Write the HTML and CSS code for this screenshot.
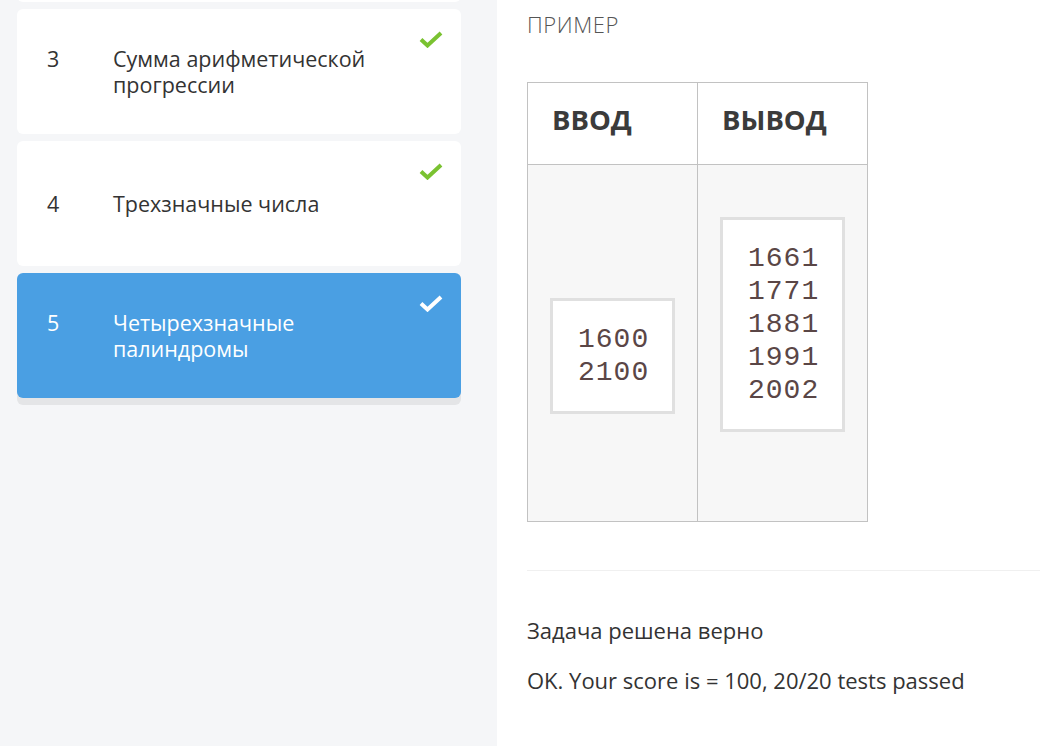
FILE: index.html
```html
<!DOCTYPE html>
<html lang="ru">
<head>
<meta charset="utf-8">
<link rel="stylesheet" href="styles.css">
</head>
<body>
<div class="page">
  <aside class="sidebar">
    <ul class="tasks">
      <li class="task task-hidden"></li>
      <li class="task">
        <div class="task-row"><span class="num">3</span><span class="title">Сумма арифметической прогрессии</span></div>
        <svg class="check" viewBox="0 0 24 17"><path d="M2 8.5l6.5 6L22 2" /></svg>
      </li>
      <li class="task">
        <div class="task-row"><span class="num">4</span><span class="title">Трехзначные числа</span></div>
        <svg class="check" viewBox="0 0 24 17"><path d="M2 8.5l6.5 6L22 2" /></svg>
      </li>
      <li class="task task-active">
        <div class="task-row"><span class="num">5</span><span class="title">Четырехзначные палиндромы</span></div>
        <svg class="check" viewBox="0 0 24 17"><path d="M2 8.5l6.5 6L22 2" /></svg>
      </li>
    </ul>
  </aside>
  <main class="content">
    <h2 class="example-title">ПРИМЕР</h2>
    <div class="sample">
      <div class="cell head">ВВОД</div>
      <div class="cell head">ВЫВОД</div>
      <div class="cell body body-in"><pre class="io">1600
2100</pre></div>
      <div class="cell body body-out"><pre class="io">1661
1771
1881
1991
2002</pre></div>
    </div>
    <hr class="divider">
    <p class="result">Задача решена верно</p>
    <p class="result">OK. Your score is = 100, 20/20 tests passed</p>
  </main>
</div>
</body>
</html>
```
FILE: styles.css
```css
html, body {
  margin: 0;
  padding: 0;
}
body {
  font-family: "Open Sans", "Noto Sans", sans-serif;
  color: #333;
  background: #fff;
}
.page {
  display: flex;
  width: 1040px;
  height: 746px;
  overflow: hidden;
}
.sidebar {
  width: 497px;
  flex: none;
  background: #f5f6f8;
  padding: 0 36px 0 17px;
  box-sizing: border-box;
}
.tasks {
  list-style: none;
  margin: -123px 0 0;
  padding: 0;
  display: flex;
  flex-direction: column;
  gap: 7px;
}
.task {
  position: relative;
  height: 125px;
  background: #fff;
  border-radius: 6px;
  display: flex;
  align-items: center;
  padding: 0 50px 0 30px;
  box-sizing: border-box;
  font-size: 21.5px;
  line-height: 26px;
  color: #333;
}
.task-row {
  display: flex;
  align-items: flex-start;
  flex: 1;
}
.task-active {
  background: #4a9fe3;
  color: #fff;
  box-shadow: 0 7px 0 #e4e5e7;
}
.num {
  width: 66px;
  flex: none;
}
.title {
  flex: 1;
}
.check {
  position: absolute;
  top: 22px;
  right: 18px;
  width: 24px;
  height: 17px;
  fill: none;
  stroke: #7ac231;
  stroke-width: 4;
}
.task-active .check {
  stroke: #fff;
}
.content {
  flex: 1;
  padding: 0 0 0 30px;
}
.example-title {
  margin: 11px 0 0;
  font-size: 22px;
  font-weight: 300;
  color: #555;
  letter-spacing: 0.6px;
  line-height: 26px;
}
.sample {
  margin-top: 45px;
  display: grid;
  grid-template-columns: 169px 170px;
  grid-template-rows: 82px 356px;
  width: max-content;
  border: 1px solid #c2c2c2;
}
.cell {
  box-sizing: border-box;
}
.head + .head,
.body + .body {
  border-left: 1px solid #c2c2c2;
}
.head {
  display: flex;
  align-items: center;
  padding: 0 0 8px 24px;
  font-size: 27.5px;
  font-weight: 700;
  color: #3b3b3b;
  border-bottom: 1px solid #c2c2c2;
}
.body {
  background: #f7f7f7;
  padding-left: 22px;
}
.body-in {
  padding-top: 133px;
}
.body-out {
  padding-top: 52px;
}
.io {
  display: inline-block;
  margin: 0;
  background: #fff;
  border: 3px solid #e0e0e0;
  padding: 22px 23px 22px 25px;
  font-family: "Liberation Mono", "Courier New", monospace;
  font-size: 28px;
  line-height: 33px;
  color: #5a4646;
  letter-spacing: 1px;
}
.divider {
  margin: 48px 0 0;
  border: none;
  border-top: 1px solid #f0f0f0;
}
.result {
  margin: 0;
  font-size: 22px;
  line-height: 28px;
  color: #333;
}
.result:first-of-type {
  margin-top: 45px;
}
.result + .result {
  margin-top: 22px;
}
```
